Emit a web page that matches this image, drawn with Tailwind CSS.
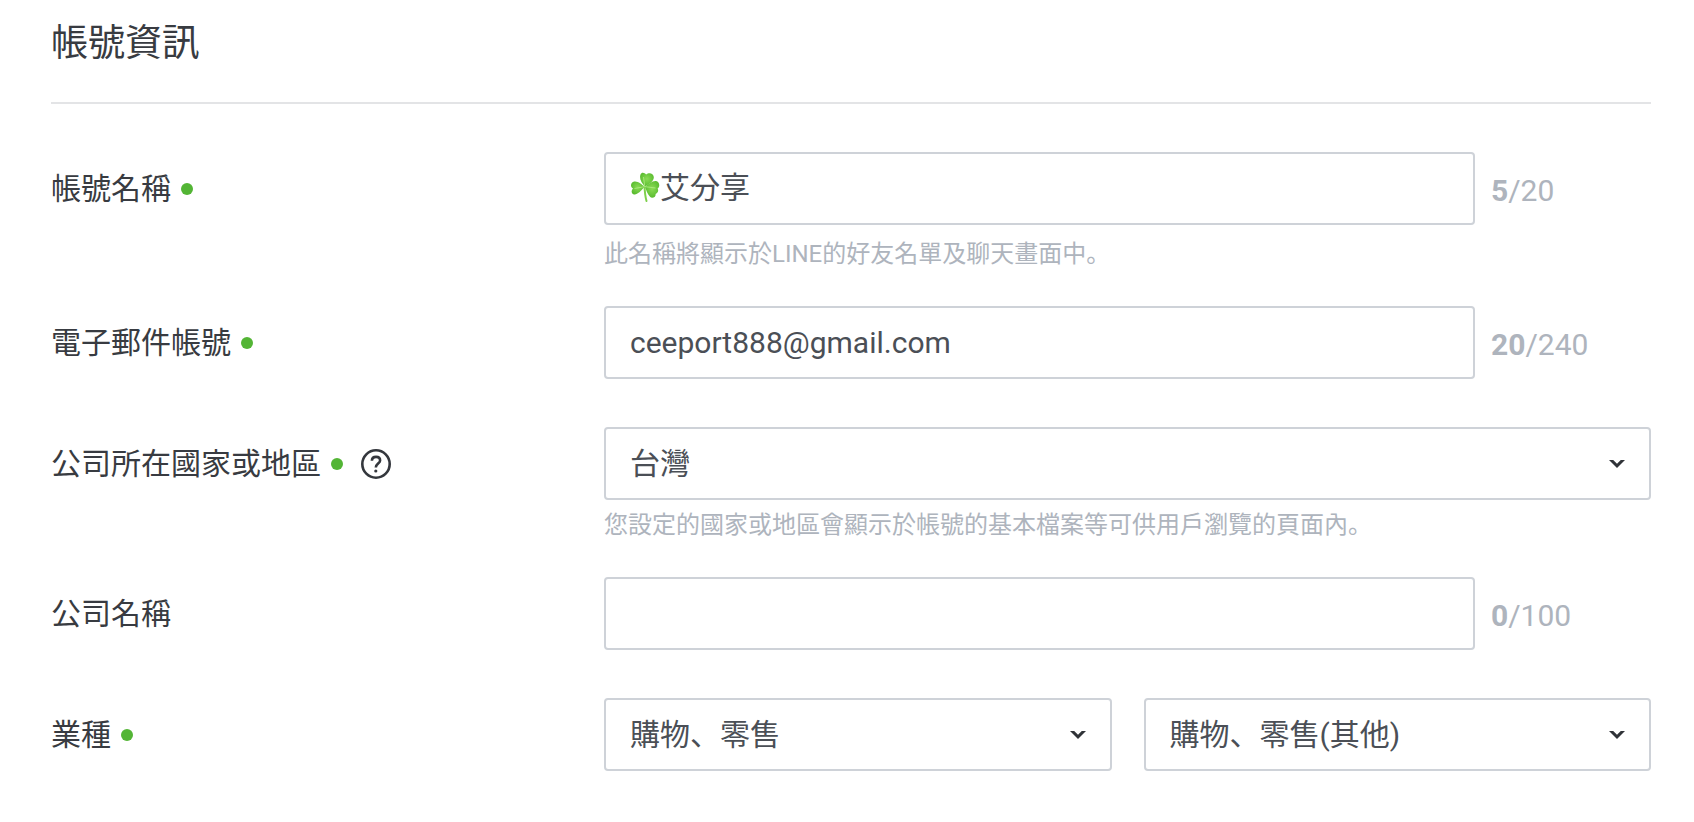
<!DOCTYPE html>
<html lang="zh-Hant">
<head>
<meta charset="utf-8">
<meta name="viewport" content="width=device-width, initial-scale=1">
<title>帳號資訊</title>
<script src="https://cdn.jsdelivr.net/npm/@tailwindcss/browser@4"></script>
</head>
<body class="bg-white font-['Roboto','Noto_Sans_CJK_JP',sans-serif] text-[30px] leading-[44px] text-[#383b41] [font-feature-settings:'locl'_0]">
<svg class="hidden" aria-hidden="true">
  <symbol id="chevron" viewBox="0 0 16 8"><path d="M0 0h4.200L8 3.700 11.800 0H16L8 8z" fill="#303338"/></symbol>
</svg>
<main class="pl-[51px] pr-[43px]">
  <h1 class="border-b-2 border-[#e3e4e6] pt-4 pb-[30px] text-[37px] leading-[56px] font-normal">帳號資訊</h1>
  <form class="pt-12">
    <div class="mb-[39px] flex">
      <div class="flex h-[73px] w-[553px] shrink-0 items-center">
        <label for="name">帳號名稱</label>
        <span class="ml-[10px] size-3 rounded-full bg-[#53b535]"></span>
      </div>
      <div class="min-w-0 flex-1">
        <div class="flex items-center">
          <div class="relative flex min-w-0 flex-1">
            <input id="name" type="text" value="艾分享" class="h-[73px] w-full rounded-[4px] border-2 border-[#ced2d8] bg-white pr-6 pb-2 pl-[54px] text-[#4b4f56]">
            <svg class="absolute top-5 left-[26px] h-[30px] w-[30px]" viewBox="0 0 29 30" aria-hidden="true">
              <defs>
                <radialGradient id="leaf" cx="50%" cy="45%" r="60%"><stop offset="0" stop-color="#8bdc55"/><stop offset="1" stop-color="#55b82c"/></radialGradient>
              </defs>
              <path d="M14 14c.2 5 .6 10 2 15" fill="none" stroke="#7ed04b" stroke-width="2" stroke-linecap="round"/>
              <path d="M14.500 14.500C11 11 8.500 6.500 10 2.600 11-.2 14 .2 15.600 2.600 18.500-.2 23 1.500 23.300 5 23.500 9 19 12 14.500 14.500z" fill="url(#leaf)"/>
              <path d="M14 14.800C10 19.500 6 23.800 2.800 22.200.6 21 .8 18 2.500 16.400-.4 15 .1 10.800 3 9.700 7 8.500 11 12 14 14.800z" fill="url(#leaf)"/>
              <path d="M14.500 14.800C18 12 22 8.500 25.500 9c3.500.7 4.400 5.500 1.600 7.500 1.700 3-.8 5-2 5.500.5 3.600-4 5-5.600 2.700C17 22 15.500 18 14.500 14.800z" fill="url(#leaf)"/>
              <path d="M14.300 14.600 13 5M14.300 14.600 4 16.500M14.300 14.600 25 16" fill="none" stroke="#b4ee86" stroke-width=".8"/>
            </svg>
          </div>
          <p class="w-[176px] pt-[5px] pl-4 text-[#aeb4bd]"><b class="font-bold">5</b>/20</p>
        </div>
        <p class="mt-4 text-[24px] leading-[26px] text-[#aeb4bd]">此名稱將顯示於LINE的好友名單及聊天畫面中。</p>
      </div>
    </div>

    <div class="mb-12 flex">
      <div class="flex h-[73px] w-[553px] shrink-0 items-center">
        <label for="email">電子郵件帳號</label>
        <span class="ml-[10px] size-3 rounded-full bg-[#53b535]"></span>
      </div>
      <div class="flex min-w-0 flex-1 items-center">
        <input id="email" type="email" value="ceeport888@gmail.com" class="h-[73px] min-w-0 flex-1 rounded-[4px] border-2 border-[#ced2d8] bg-white px-6 text-[#4b4f56]">
        <p class="w-[176px] pt-[5px] pl-4 text-[#aeb4bd]"><b class="font-bold">20</b>/240</p>
      </div>
    </div>

    <div class="mb-[39px] flex">
      <div class="flex h-[73px] w-[553px] shrink-0 items-center">
        <label for="country">公司所在國家或地區</label>
        <span class="ml-[10px] size-3 rounded-full bg-[#53b535]"></span>
        <button type="button" aria-label="說明" class="ml-[18px]">
          <svg class="block size-[30px]" viewBox="0 0 30 30" fill="none" stroke="#34373d" aria-hidden="true">
            <circle cx="15" cy="15" r="13.700" stroke-width="2.600"/>
            <path d="M10.900 11.800c0-2.300 1.700-3.900 4.200-3.900s4 1.500 4 3.600c0 2.900-4.300 3.400-4.300 7" stroke-width="2.600"/>
            <circle cx="14.800" cy="22" r="1.600" fill="#34373d" stroke="none"/>
          </svg>
        </button>
      </div>
      <div class="min-w-0 flex-1">
        <div class="relative flex">
          <select id="country" class="h-[73px] w-full appearance-none rounded-[4px] border-2 border-[#ced2d8] bg-white px-6 text-[#4b4f56]"><option>台灣</option></select>
          <svg class="pointer-events-none absolute top-[33px] right-[26px] h-2 w-4"><use href="#chevron"/></svg>
        </div>
        <p class="mt-3 text-[24px] leading-[26px] text-[#aeb4bd]">您設定的國家或地區會顯示於帳號的基本檔案等可供用戶瀏覽的頁面內。</p>
      </div>
    </div>

    <div class="mb-12 flex">
      <div class="flex h-[73px] w-[553px] shrink-0 items-center">
        <label for="company">公司名稱</label>
      </div>
      <div class="flex min-w-0 flex-1 items-center">
        <input id="company" type="text" class="h-[73px] min-w-0 flex-1 rounded-[4px] border-2 border-[#ced2d8] bg-white px-6 text-[#4b4f56]">
        <p class="w-[176px] pt-[5px] pl-4 text-[#aeb4bd]"><b class="font-bold">0</b>/100</p>
      </div>
    </div>

    <div class="flex">
      <div class="flex h-[73px] w-[553px] shrink-0 items-center">
        <label for="industry">業種</label>
        <span class="ml-[10px] size-3 rounded-full bg-[#53b535]"></span>
      </div>
      <div class="grid min-w-0 flex-1 grid-cols-2 gap-8">
        <div class="relative flex">
          <select id="industry" class="h-[73px] w-full appearance-none rounded-[4px] border-2 border-[#ced2d8] bg-white px-6 text-[#4b4f56]"><option>購物、零售</option></select>
          <svg class="pointer-events-none absolute top-[33px] right-[26px] h-2 w-4"><use href="#chevron"/></svg>
        </div>
        <div class="relative flex">
          <select aria-label="業種細項" class="h-[73px] w-full appearance-none rounded-[4px] border-2 border-[#ced2d8] bg-white px-6 text-[#4b4f56]"><option>購物、零售(其他)</option></select>
          <svg class="pointer-events-none absolute top-[33px] right-[26px] h-2 w-4"><use href="#chevron"/></svg>
        </div>
      </div>
    </div>
  </form>
</main>
</body>
</html>
